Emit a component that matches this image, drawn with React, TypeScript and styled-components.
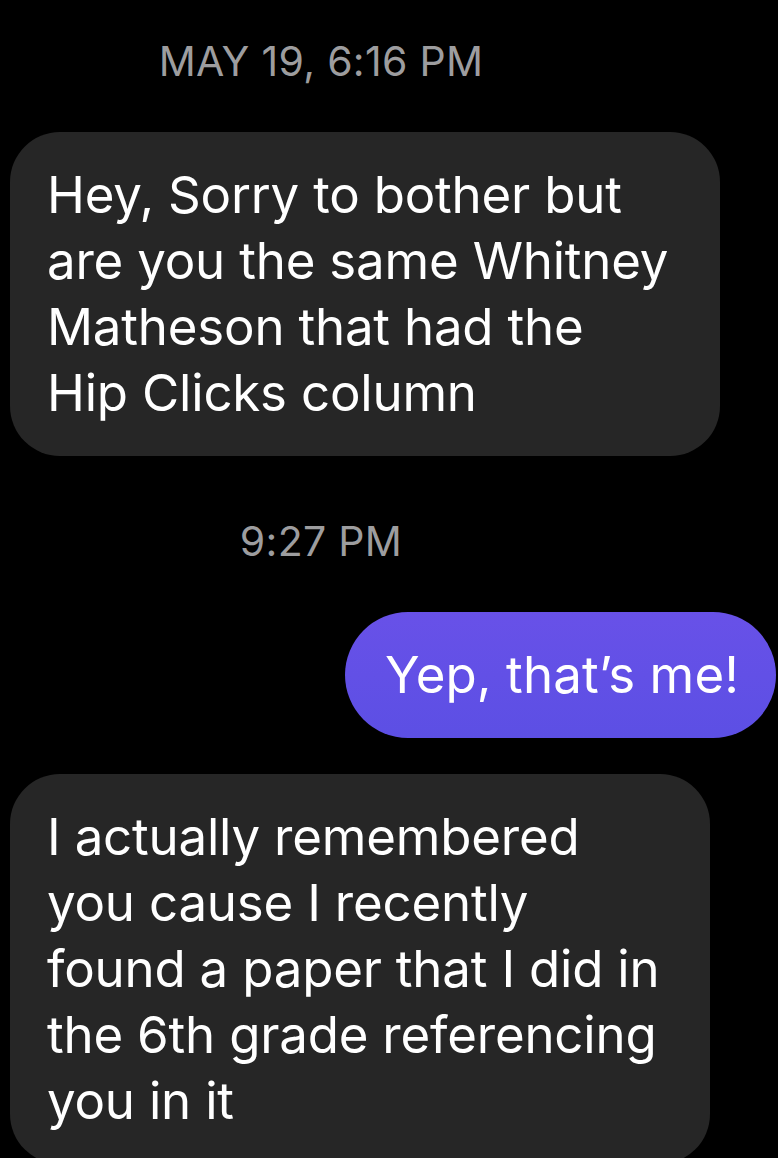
import React from "react";
import styled, { createGlobalStyle } from "styled-components";

const Global = createGlobalStyle`
  html, body { margin: 0; padding: 0; background: #000; }
  body { font-family: Inter, "Noto Sans", "Liberation Sans", sans-serif; -webkit-font-smoothing: antialiased; }
`;

const Thread = styled.div`
  display: flex;
  flex-direction: column;
  width: 778px;
  height: 1158px;
  overflow: hidden;
  padding-top: 37px;
  box-sizing: border-box;
  background: #000;
`;

const Stamp = styled.div<{ $gapBelow: number }>`
  align-self: stretch;
  padding-right: 136px;
  text-align: center;
  color: #9d9d9f;
  font-size: 41px;
  line-height: 48px;
  letter-spacing: 0.3px;
  margin-bottom: ${(p) => p.$gapBelow}px;
`;

const Bubble = styled.div<{ $mine?: boolean; $width?: number; $gapBelow?: number }>`
  box-sizing: border-box;
  align-self: ${(p) => (p.$mine ? "flex-end" : "flex-start")};
  margin-left: ${(p) => (p.$mine ? 0 : 10)}px;
  margin-right: ${(p) => (p.$mine ? 2 : 0)}px;
  width: ${(p) => (p.$width ? `${p.$width}px` : "auto")};
  padding: 30px ${(p) => (p.$mine ? 37 : 30)}px 30px ${(p) => (p.$mine ? 40 : 37)}px;
  border-radius: ${(p) => (p.$mine ? 63 : 50)}px;
  background: ${(p) => (p.$mine ? "linear-gradient(180deg, #6851e8 0%, #5c4fe4 100%)" : "#262626")};
  color: #fff;
  font-size: 51px;
  line-height: 66px;
  letter-spacing: ${(p) => (p.$mine ? 0.1 : -0.2)}px;
  margin-bottom: ${(p) => p.$gapBelow ?? 0}px;
  flex-shrink: 0;
`;

const Line = styled.span`
  display: block;
  white-space: nowrap;
`;

const lines1 = [
  "Hey, Sorry to bother but",
  "are you the same Whitney",
  "Matheson that had the",
  "Hip Clicks column",
];
const lines3 = [
  "I actually remembered",
  "you cause I recently",
  "found a paper that I did in",
  "the 6th grade referencing",
  "you in it",
];

export default function App() {
  return (
    <>
      <Global />
      <Thread>
        <Stamp $gapBelow={47}>MAY 19, 6:16 PM</Stamp>
        <Bubble $width={710} $gapBelow={61}>
          {lines1.map((l) => (
            <Line key={l}>{l}</Line>
          ))}
        </Bubble>
        <Stamp $gapBelow={47}>9:27 PM</Stamp>
        <Bubble $mine $gapBelow={36}>
          <Line>Yep, that’s me!</Line>
        </Bubble>
        <Bubble $width={700}>
          {lines3.map((l) => (
            <Line key={l}>{l}</Line>
          ))}
        </Bubble>
      </Thread>
    </>
  );
}
